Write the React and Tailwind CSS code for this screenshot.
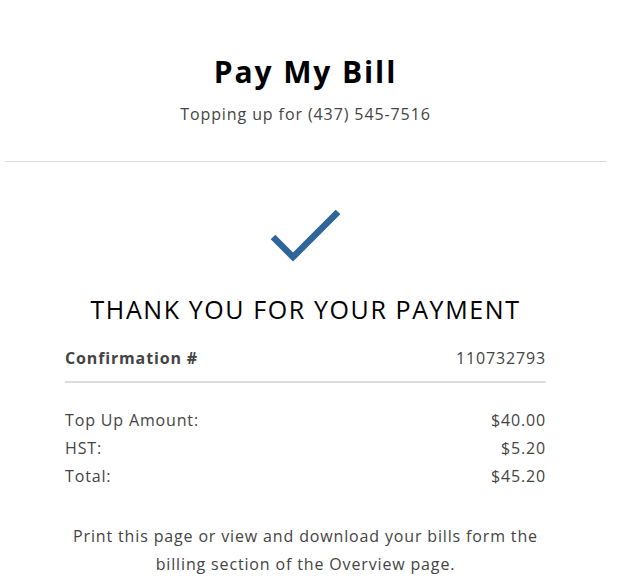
export default function App() {
  return (
    <div className="bg-white w-full min-h-[586px] pl-[5px] pr-[11px] text-[#444]" style={{ fontFamily: '"Open Sans", sans-serif' }}>
      <div className="flex flex-col items-center pt-[52px] pb-[35px] border-b border-[#ddd]">
        <h1 className="text-[30px] leading-[40px] font-bold text-black tracking-[1.9px]">Pay My Bill</h1>
        <p className="mt-[10px] text-[16px] leading-[24px] text-[#444] tracking-[0.9px]">Topping up for (437) 545-7516</p>
      </div>
      <div className="flex flex-col items-center">
        <svg className="mt-[48px]" width="72" height="52" viewBox="0 0 72 52">
          <path d="M3 27 L23 47 L68 2" fill="none" stroke="#2f6699" strokeWidth="6.5" />
        </svg>
        <h2 className="mt-[32px] text-[25px] leading-[30px] text-black tracking-[1.6px]">THANK YOU FOR YOUR PAYMENT</h2>
        <div className="w-[481px] mt-[22px] tracking-[0.85px]">
          <div className="flex justify-between pb-[11px] border-b-2 border-[#ddd] text-[16px] leading-[24px]">
            <span className="font-bold">Confirmation #</span>
            <span>110732793</span>
          </div>
          <div className="pt-[23px] text-[16px] leading-[28px]">
            <div className="flex justify-between"><span>Top Up Amount:</span><span>$40.00</span></div>
            <div className="flex justify-between"><span>HST:</span><span>$5.20</span></div>
            <div className="flex justify-between"><span>Total:</span><span>$45.20</span></div>
          </div>
        </div>
        <p className="mt-[32px] w-[490px] text-center text-[16px] leading-[28px] tracking-[0.85px]">
          Print this page or view and download your bills form the billing section of the Overview page.
        </p>
      </div>
    </div>
  );
}
